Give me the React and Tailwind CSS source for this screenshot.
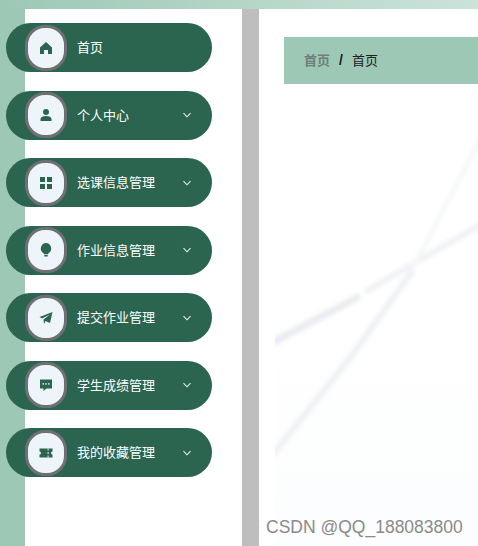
import React from "react";

const cn = "#2b6550";
const Home = () => (
  <svg width="14" height="14" viewBox="0 0 14 14" fill={cn}><path d="M7 1 L13 6.5 V13 H9 V9 H5 V13 H1 V6.5Z" /></svg>
);
const User = () => (
  <svg width="14" height="14" viewBox="0 0 14 14" fill={cn}><circle cx="7" cy="4" r="3" /><path d="M1.5 13 V11 C1.5 9 4 8 7 8 S12.5 9 12.5 11 V13Z" /></svg>
);
const Grid = () => (
  <svg width="14" height="14" viewBox="0 0 14 14" fill={cn}><rect x="1" y="1" width="5" height="5" /><rect x="8" y="1" width="5" height="5" /><rect x="1" y="8" width="5" height="5" /><rect x="8" y="8" width="5" height="5" /></svg>
);
const Bulb = () => (
  <svg width="14" height="14" viewBox="0 0 14 14" fill={cn}><path d="M7 0 A5.5 5.5 0 0 1 9.5 10.2 L9 11.2 H5 L4.5 10.2 A5.5 5.5 0 0 1 7 0Z" /><rect x="5.2" y="12" width="3.6" height="1.6" rx="0.6" /></svg>
);
const Send = () => (
  <svg width="14" height="14" viewBox="0 0 14 14" fill={cn}><path d="M13.5 1 L11 12 L6.5 10 L5 13 L4.5 8.5 L11 3.5 L3 7.5 L0.5 6Z" /></svg>
);
const Chat = () => (
  <svg width="14" height="14" viewBox="0 0 14 14"><path fill={cn} d="M1 1.5 H13 V10.5 H7.5 L4.5 13 V10.5 H1Z" /><rect x="3.5" y="5.2" width="1.4" height="1.4" fill="#fff" /><rect x="6.3" y="5.2" width="1.4" height="1.4" fill="#fff" /><rect x="9.1" y="5.2" width="1.4" height="1.4" fill="#fff" /></svg>
);
const Ticket = () => (
  <svg width="14" height="14" viewBox="0 0 14 14" fill={cn}><path d="M0.5 2.5 H13.5 V5.5 A1.5 1.5 0 0 0 13.5 8.5 V11.5 H0.5 V8.5 A1.5 1.5 0 0 0 0.5 5.5Z" /><rect x="8.6" y="2.5" width="1" height="2" fill="#edf5fb" /><rect x="8.6" y="6" width="1" height="2" fill="#edf5fb" /><rect x="8.6" y="9.5" width="1" height="2" fill="#edf5fb" /></svg>
);
const Chevron = () => (
  <svg width="10" height="10" viewBox="0 0 10 10" fill="none" stroke="#e6f0ec" strokeWidth="1.1"><path d="M1.5 3.2 L5 6.8 L8.5 3.2" /></svg>
);

const items = [
  { label: "首页", Icon: Home, arrow: false },
  { label: "个人中心", Icon: User, arrow: true },
  { label: "选课信息管理", Icon: Grid, arrow: true },
  { label: "作业信息管理", Icon: Bulb, arrow: true },
  { label: "提交作业管理", Icon: Send, arrow: true },
  { label: "学生成绩管理", Icon: Chat, arrow: true },
  { label: "我的收藏管理", Icon: Ticket, arrow: true },
];

export default function App() {
  return (
    <div
      className="relative w-[478px] h-[546px] overflow-hidden bg-white flex flex-col"
      style={{ fontFamily: '"Liberation Sans","Noto Sans CJK SC",sans-serif' }}
    >
      <div className="h-[9px] shrink-0 bg-gradient-to-r from-[#9dc8b5] to-[#cbe3d9]" />
      <div className="flex flex-1 min-h-0">
        <aside className="relative w-[242px] shrink-0 bg-[linear-gradient(to_right,#9dc8b5_25px,#ffffff_25px)] pt-[14px] pl-[6px] flex flex-col gap-[18.5px]">
          {items.map(({ label, Icon, arrow }) => (
            <div key={label} className="flex items-center w-[206px] h-[49px] shrink-0 rounded-[25px] bg-[#2b6550]">
              <div className="ml-[19px] w-[42px] h-[46px] shrink-0 flex items-center justify-center rounded-[20px] border-[3px] border-[#6f7073] bg-[#edf5fb]">
                <Icon />
              </div>
              <span className="ml-[10px] pt-[1px] flex-1 text-[13px] text-white">{label}</span>
              {arrow && <span className="mr-[20px] flex"><Chevron /></span>}
            </div>
          ))}
        </aside>
        <div className="w-[17px] shrink-0 bg-[#bebebe]" />
        <main className="relative flex-1 min-w-0 bg-white pt-[28px] pl-[25px]">
          <div className="flex items-center h-[47px] pl-[20px] bg-[#9dc8b5] text-[13px]">
            <span className="font-bold text-[#6d7f77]">首页</span>
            <span className="mx-[9px] text-[14px] font-bold text-[#222]">/</span>
            <span className="text-[#222]">首页</span>
          </div>
        </main>
      </div>
      <svg className="absolute left-[275px] top-[100px] pointer-events-none" width="203" height="446" viewBox="275 100 203 446">
        <defs>
          <filter id="b" x="-20%" y="-20%" width="140%" height="140%"><feGaussianBlur stdDeviation="2" /></filter>
          <linearGradient id="f" x1="0" y1="0" x2="0" y2="1"><stop offset="0" stopColor="#ffffff" /><stop offset="1" stopColor="#fcfdfe" /></linearGradient>
        </defs>
        <rect x="275" y="300" width="203" height="246" fill="url(#f)" />
        <g filter="url(#b)" fill="none">
          <path d="M270 344 L360 296" stroke="#e8ebef" strokeWidth="7" />
          <path d="M365 292 L430 254 L482 224" stroke="#eef1f4" strokeWidth="6" />
          <path d="M270 458 L350 358 L413 270" stroke="#edf0f3" strokeWidth="6" />
          <path d="M413 268 L482 136" stroke="#f5f7f8" strokeWidth="5" />
        </g>
        <rect x="265" y="320" width="10" height="150" fill="#fff" />
      </svg>
      <div className="absolute left-[266px] top-[517px] text-[17.5px] leading-[21px] text-[#8a8a8a] whitespace-nowrap">CSDN @QQ_188083800</div>
    </div>
  );
}
